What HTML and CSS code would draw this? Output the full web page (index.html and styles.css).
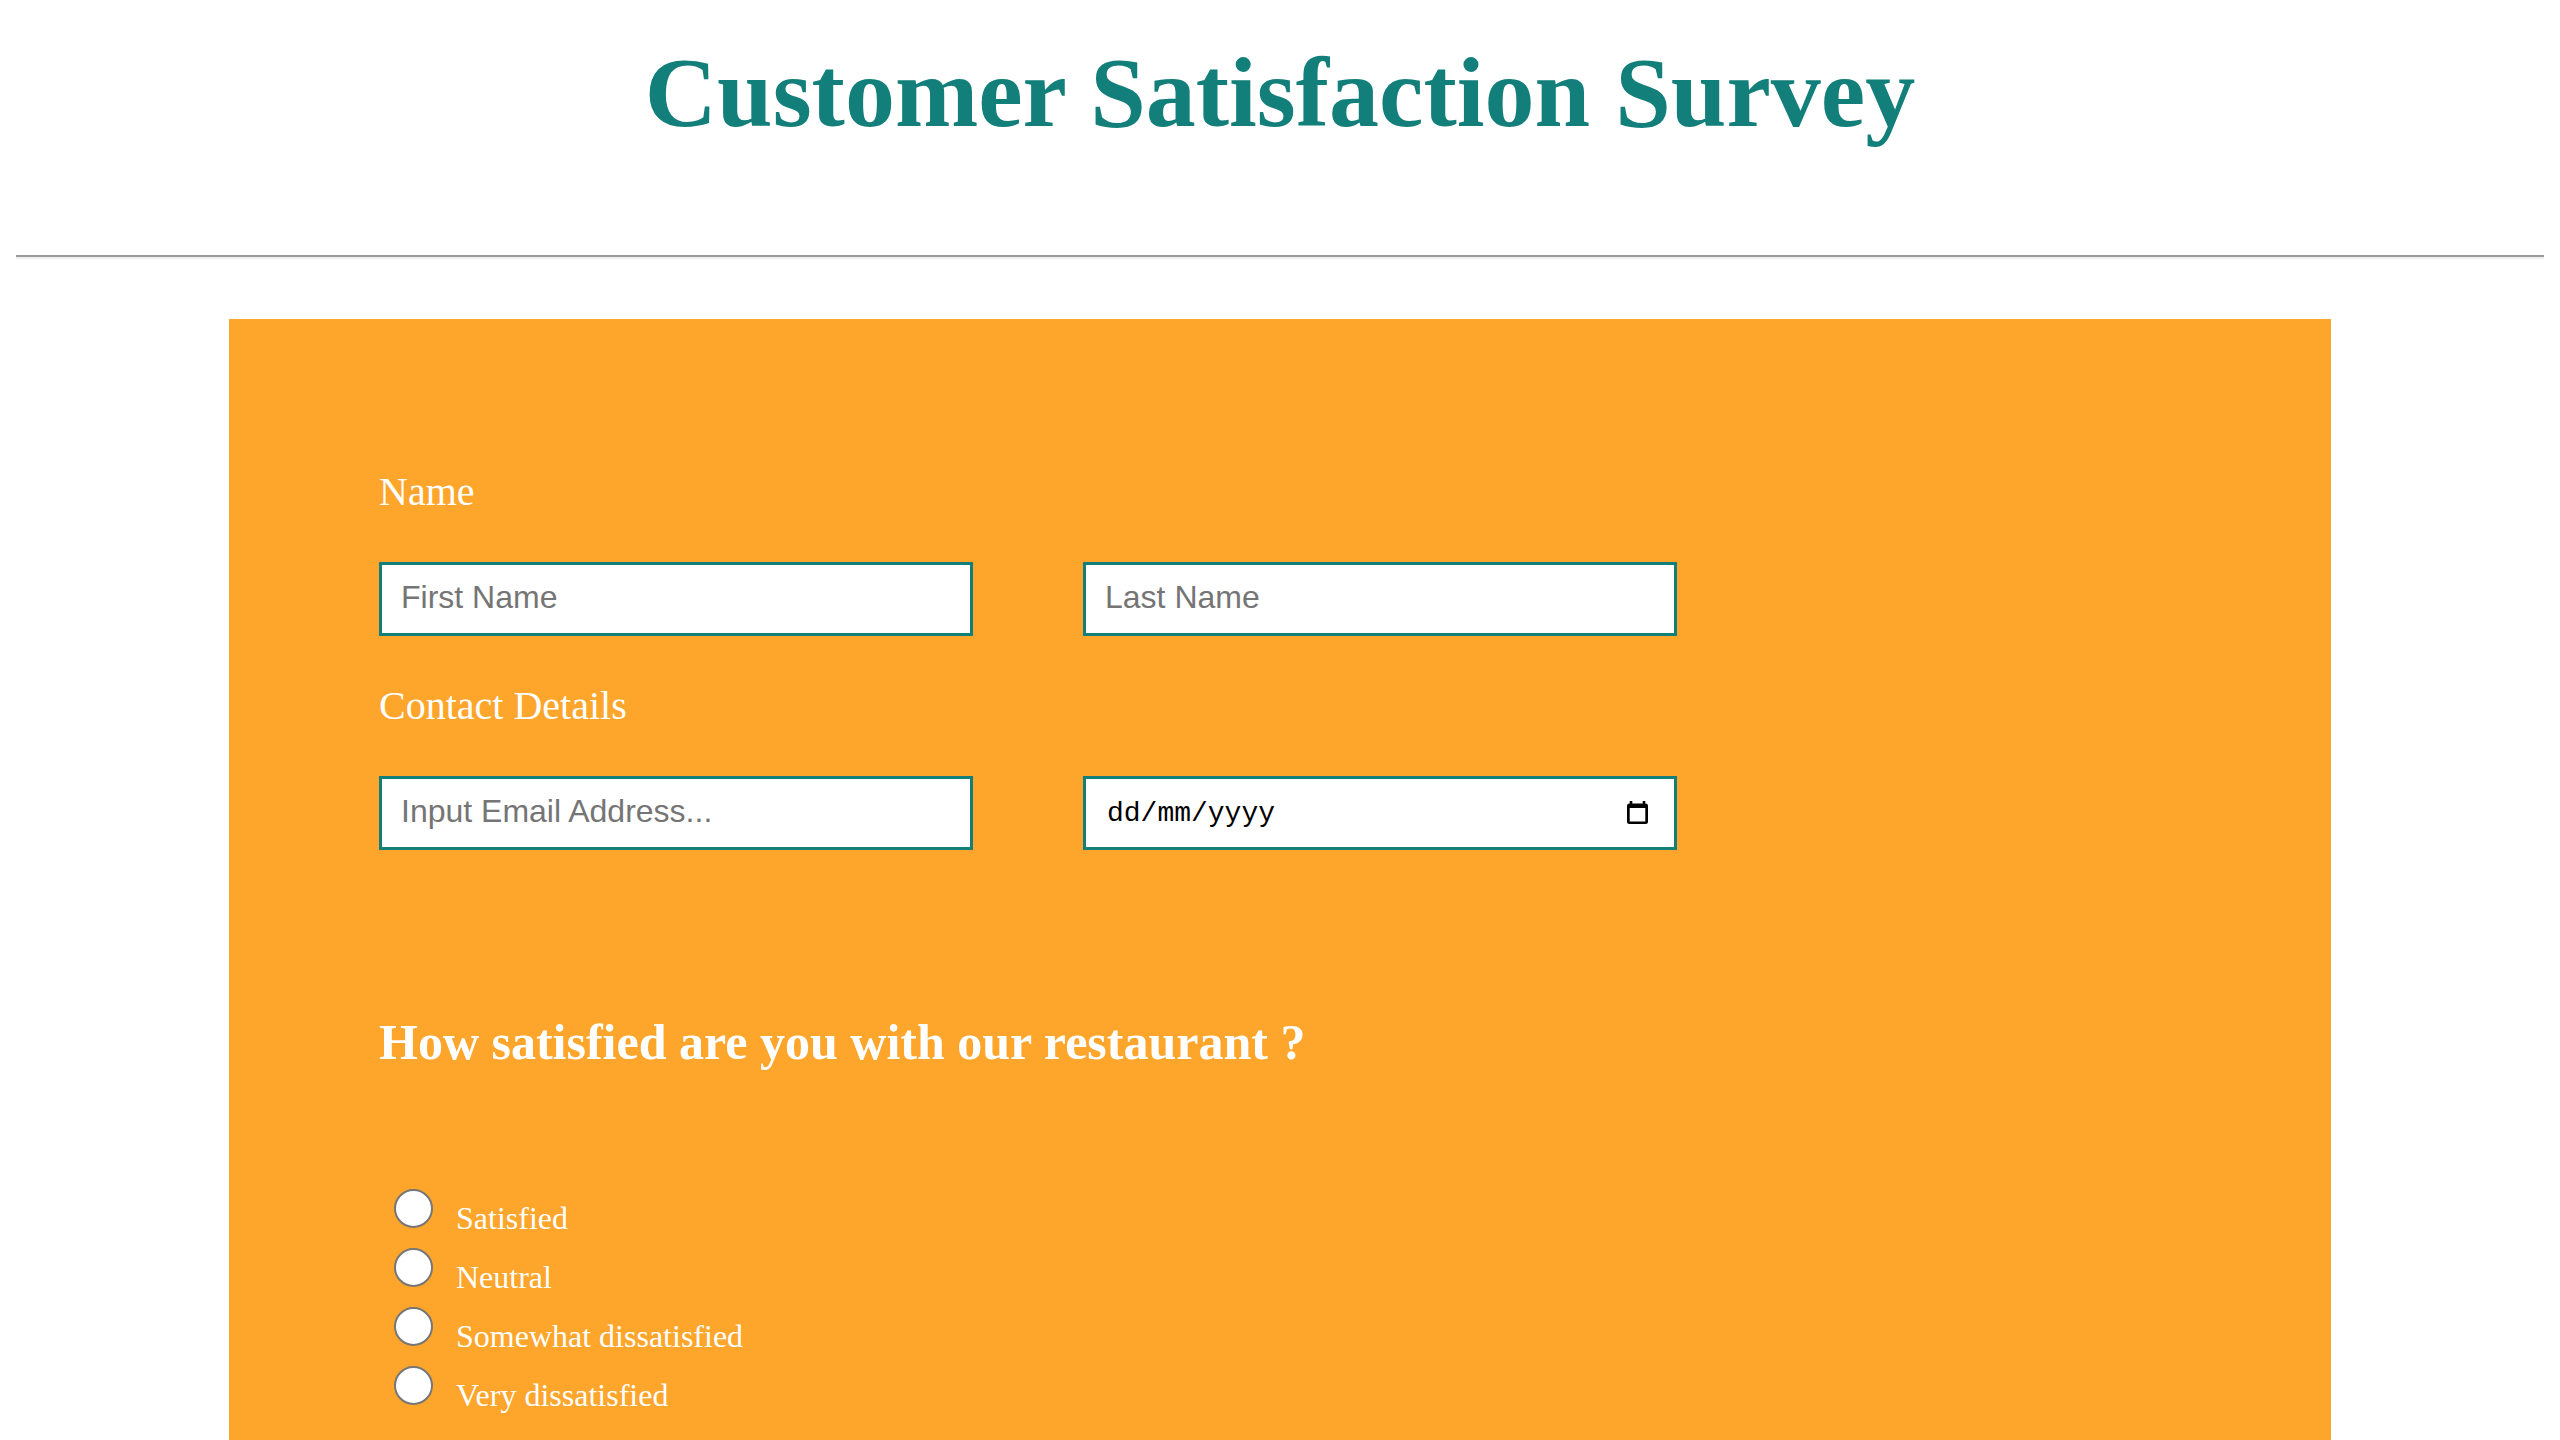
FILE: index.html
```html
<!DOCTYPE html>
<html lang="en">
<head>
<meta charset="utf-8">
<title>Customer Satisfaction Survey</title>
<link rel="stylesheet" href="styles.css">
</head>
<body>
  <h1 class="title">Customer Satisfaction Survey</h1>
  <hr class="divider">
  <form class="survey">
    <div class="field-label">Name</div>
    <div class="row">
      <input class="text-input" type="text" placeholder="First Name">
      <input class="text-input" type="text" placeholder="Last Name">
    </div>
    <div class="field-label">Contact Details</div>
    <div class="row">
      <input class="text-input" type="email" placeholder="Input Email Address...">
      <div class="date-input" role="textbox" aria-label="Date">
        <span class="date-text">dd/mm/yyyy</span>
        <svg class="cal-icon" width="21" height="23" viewBox="0 0 21 23" aria-hidden="true">
          <rect x="2.7" y="0" width="2.6" height="3.5" fill="#000"/>
          <rect x="15.7" y="0" width="2.6" height="3.5" fill="#000"/>
          <path fill="#000" fill-rule="evenodd" d="M2.5 2.5h16a2.5 2.5 0 0 1 2.5 2.5v15.5a2.5 2.5 0 0 1 -2.5 2.5h-16a2.5 2.5 0 0 1 -2.5 -2.5v-15.5a2.5 2.5 0 0 1 2.5 -2.5z M2.7 7v13.6h15.6v-13.6z"/>
        </svg>
      </div>
    </div>
    <h2 class="question">How satisfied are you with our restaurant ?</h2>
    <div class="options">
      <label class="option"><input class="radio" type="radio" name="sat" value="satisfied"><span>Satisfied</span></label>
      <label class="option"><input class="radio" type="radio" name="sat" value="neutral"><span>Neutral</span></label>
      <label class="option"><input class="radio" type="radio" name="sat" value="somewhat"><span>Somewhat dissatisfied</span></label>
      <label class="option"><input class="radio" type="radio" name="sat" value="very"><span>Very dissatisfied</span></label>
    </div>
  </form>
</body>
</html>
```

FILE: styles.css
```css
html, body {
  background: #ffffff;
}

body {
  margin: 0;
  padding: 16px;
  font-family: "Liberation Serif", "Times New Roman", serif;
}

.title {
  margin: 19px 0 0;
  text-align: center;
  font-family: "Liberation Serif", "Times New Roman", serif;
  font-weight: 700;
  font-size: 100px;
  line-height: 115px;
  color: #137f7b;
}

.divider {
  height: 0;
  margin: 105px 0 0;
  border-style: solid;
  border-width: 2px 0;
  border-top-color: #9a9a9a;
  border-bottom-color: #eeeeee;
}

.survey {
  width: 2102px;
  box-sizing: border-box;
  margin: 60px auto 0;
  padding: 150px 150px 200px;
  background: #fea52b;
}

.field-label {
  margin: 0 0 47px;
  font-size: 40px;
  line-height: 46px;
  color: #ffffff;
}

.row {
  display: flex;
  gap: 110px;
  margin-bottom: 47px;
}

.text-input,
.date-input {
  width: 594px;
  height: 74px;
  box-sizing: border-box;
  margin: 0;
  border: 3px solid #137f7b;
  border-radius: 0;
  background: #ffffff;
  outline: none;
}

.text-input {
  padding: 0 19px 3px;
  font-family: "Liberation Sans", Arial, sans-serif;
  font-size: 32px;
  color: #000000;
}

.text-input::placeholder {
  color: #757575;
  opacity: 1;
}

.date-input {
  display: flex;
  align-items: center;
  justify-content: space-between;
  padding: 2px 26px 0 21px;
}

.date-text {
  font-family: "Liberation Mono", "Courier New", monospace;
  font-size: 28px;
  line-height: 32px;
  color: #000000;
}

.cal-icon {
  display: block;
  margin-top: -4px;
}

.question {
  margin: 164px 0 0;
  font-family: "Liberation Serif", "Times New Roman", serif;
  font-weight: 700;
  font-size: 50px;
  line-height: 57px;
  color: #ffffff;
}

.options {
  margin-top: 118px;
  display: flex;
  flex-direction: column;
}

.option {
  display: flex;
  align-items: flex-start;
  font-size: 32px;
  line-height: 59px;
  color: #ffffff;
}

.radio {
  appearance: none;
  -webkit-appearance: none;
  width: 39px;
  height: 39px;
  box-sizing: border-box;
  margin: 0 23px 0 15px;
  border: 2px solid #767676;
  border-radius: 50%;
  background: #ffffff;
  flex: none;
}
```
